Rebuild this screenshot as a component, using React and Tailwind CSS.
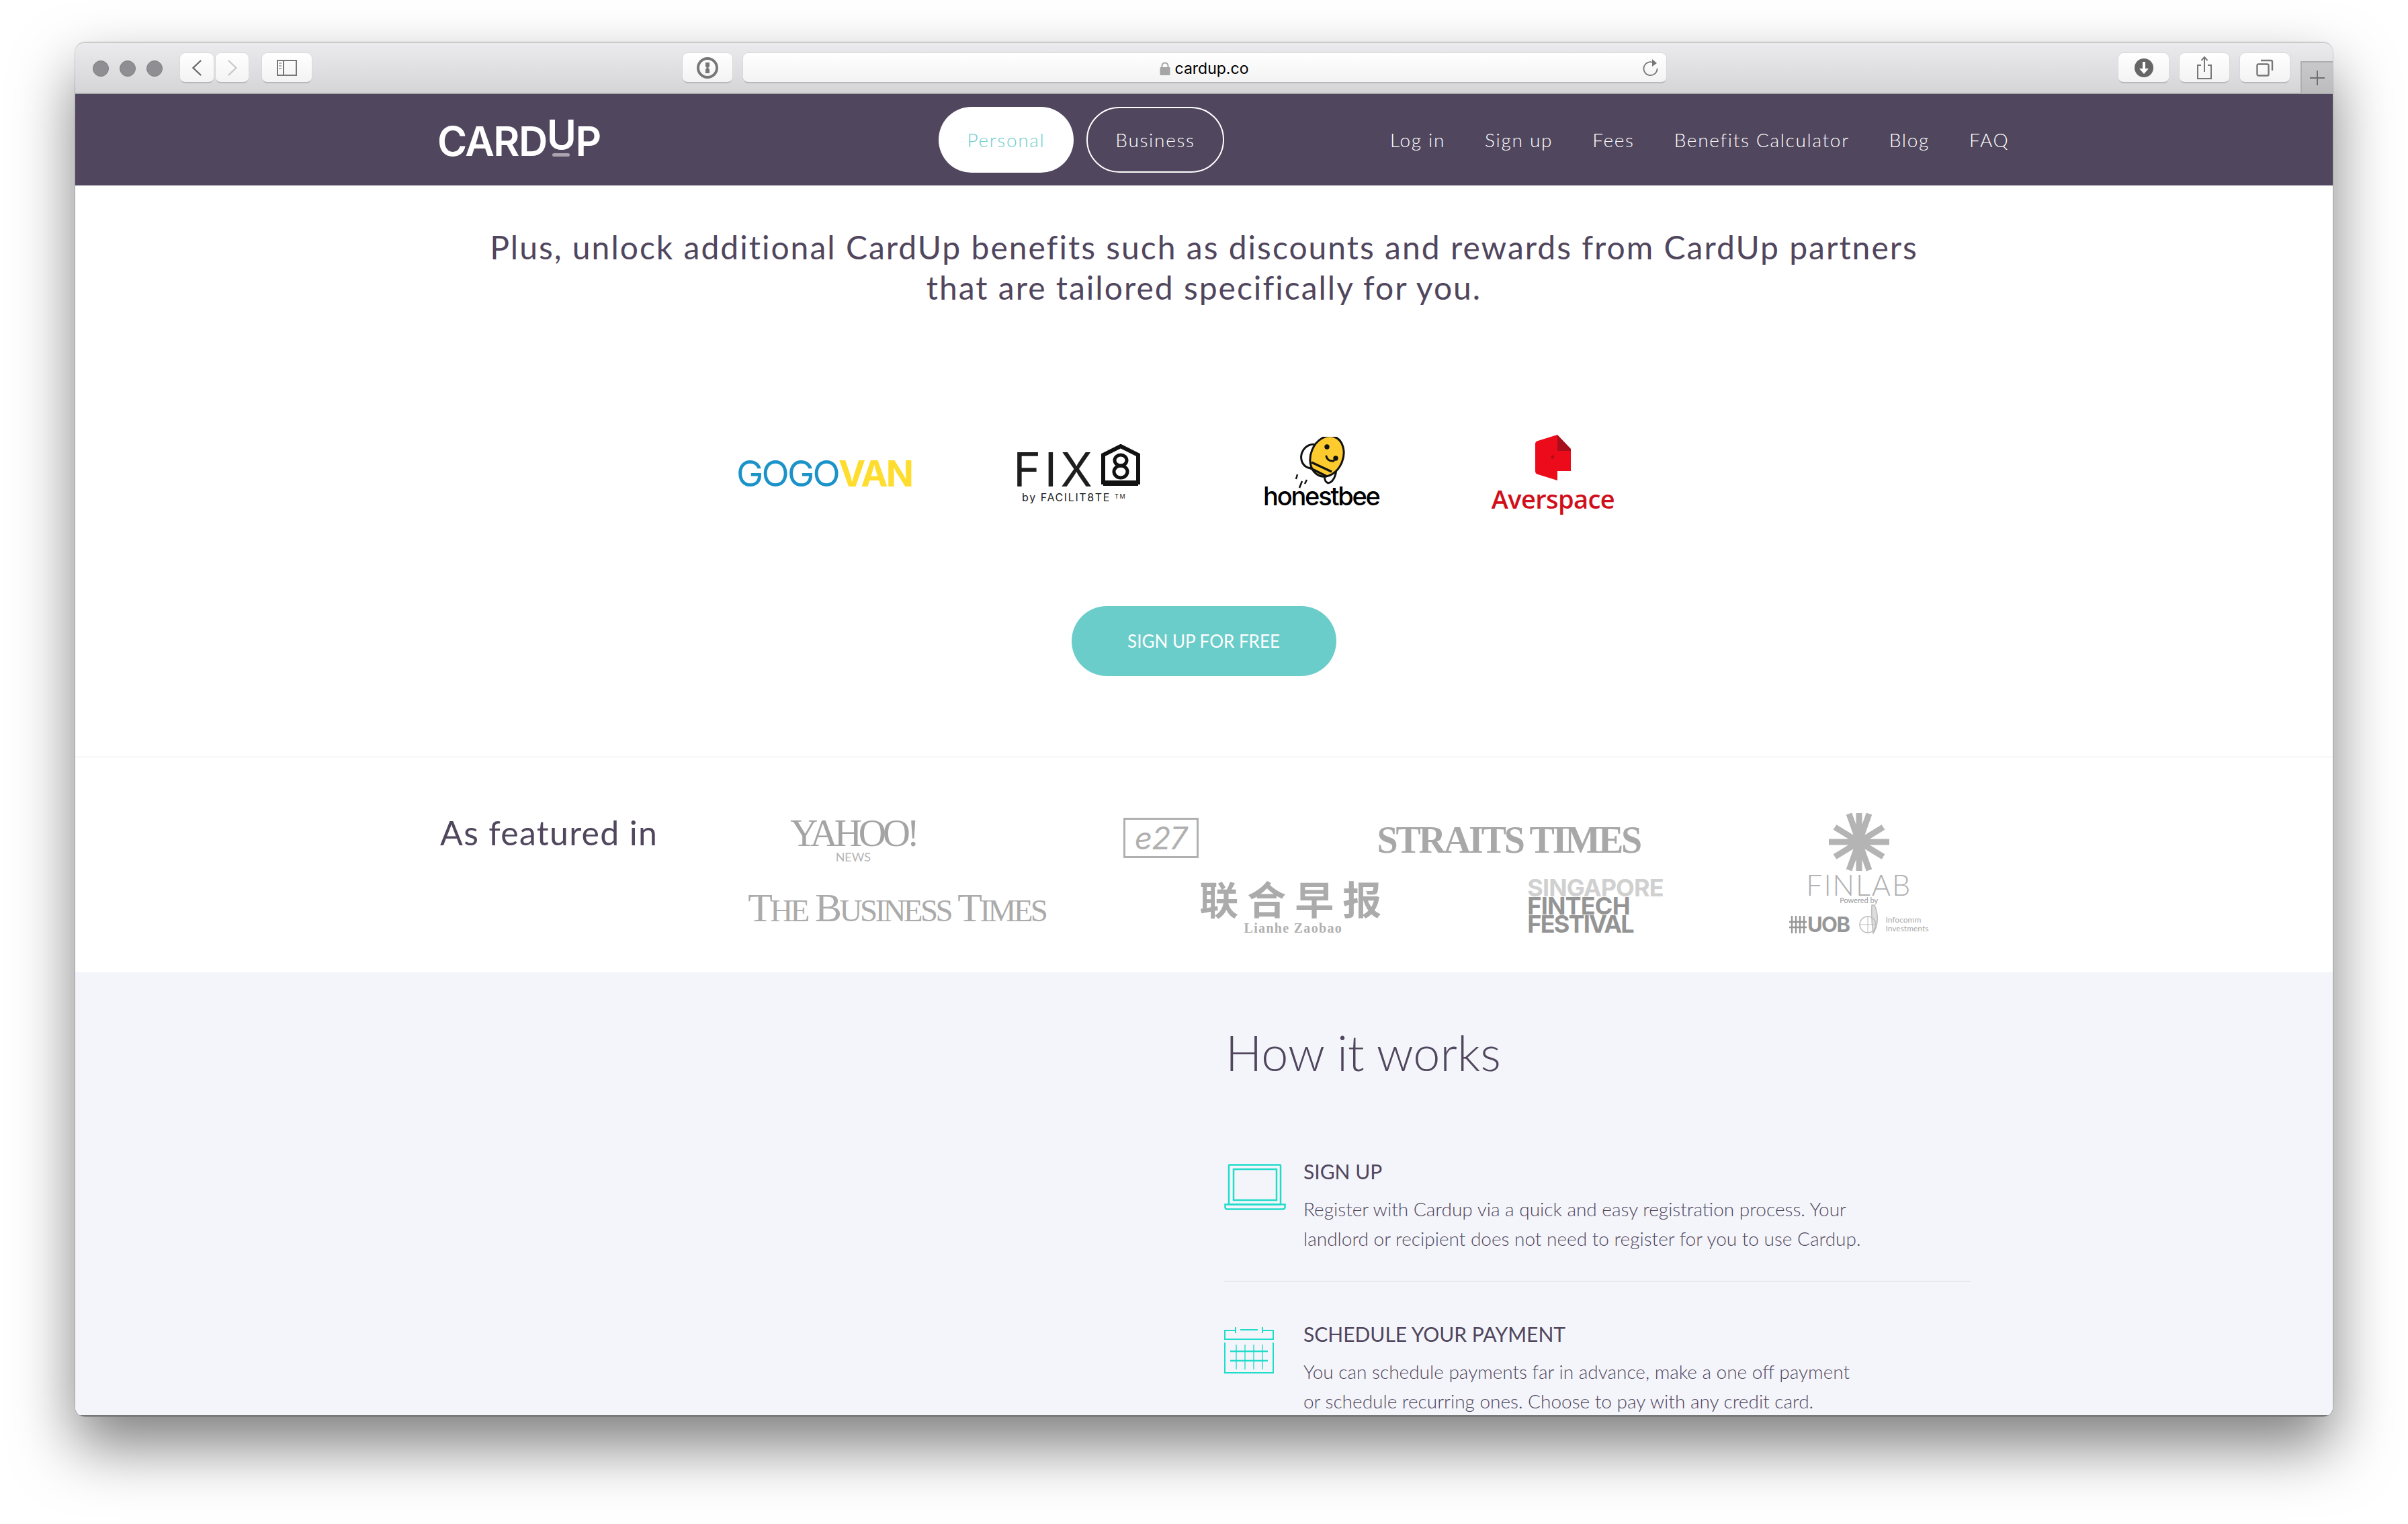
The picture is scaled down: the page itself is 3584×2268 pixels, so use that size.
const lato = { fontFamily: 'Lato, sans-serif' };
const inter = { fontFamily: 'Inter, sans-serif' };
const serif = { fontFamily: '"Liberation Serif", serif' };

const navLinks = ['Log in', 'Sign up', 'Fees', 'Benefits Calculator', 'Blog', 'FAQ'];

const ToolButton = ({ className = '', children }) => (
  <div className={`h-[45px] flex items-center justify-center rounded-[8px] bg-gradient-to-b from-white to-[#f3f3f4] border-b-2 border-[#b9b8bb] shadow-[0_0_0_1px_#d8d7da] ${className}`}>
    {children}
  </div>
);

const OnePassword = () => (
  <svg width="34" height="34" viewBox="0 0 34 34">
    <circle cx="17" cy="17" r="14" fill="none" stroke="#777" strokeWidth="4" />
    <path d="M14 9h6v6l-2 2 2 2v6h-6v-6l2-2-2-2z" fill="#777" />
  </svg>
);

const SidebarIcon = () => (
  <svg width="30" height="24" viewBox="0 0 30 24" fill="none" stroke="#777" strokeWidth="2">
    <rect x="1" y="1" width="28" height="22" />
    <path d="M10 1v22" />
    <path d="M3 5h4M3 9h4M3 13h4" strokeWidth="1.5" stroke="#999" />
  </svg>
);

const Chevron = ({ color, flip }) => (
  <svg width="14" height="24" viewBox="0 0 14 24" fill="none" stroke={color} strokeWidth="2.4" strokeLinecap="round" className={flip ? 'rotate-180' : ''}>
    <path d="M12.5 1.5L1.5 12l11 10.5" />
  </svg>
);

const Toolbar = () => (
  <div className="h-[77px] flex bg-gradient-to-b from-[#ebeaec] to-[#d5d4d7] border-t border-[#c9c9c9] border-b-2 border-b-[#aeadb0] rounded-t-[14px] relative">
    <div className="flex items-center w-full h-[45px] mt-[15px] pl-[26px]">
      <div className="flex gap-[16px]">
        <div className="w-[24px] h-[24px] rounded-full bg-[#8f8e92] border border-[#7d7c80]" />
        <div className="w-[24px] h-[24px] rounded-full bg-[#8f8e92] border border-[#7d7c80]" />
        <div className="w-[24px] h-[24px] rounded-full bg-[#8f8e92] border border-[#7d7c80]" />
      </div>
      <ToolButton className="w-[50px] ml-[26px]"><Chevron color="#6d6d6d" /></ToolButton>
      <ToolButton className="w-[49px] ml-[3px]"><Chevron color="#c9c9c9" flip /></ToolButton>
      <ToolButton className="w-[74px] ml-[20px]"><SidebarIcon /></ToolButton>
      <ToolButton className="w-[74px] ml-[552px]"><OnePassword /></ToolButton>
      <ToolButton className="w-[1374px] ml-[16px] relative">
        <div className="flex items-center gap-[7px] mt-[3px] -ml-[2px]" style={inter}>
          <svg width="16" height="20" viewBox="0 0 16 20">
            <path d="M3.5 9V6a4.5 4.5 0 0 1 9 0v3" fill="none" stroke="#a5a5a5" strokeWidth="2" />
            <rect x="0.5" y="8" width="15" height="12" rx="1" fill="#a5a5a5" />
          </svg>
          <span className="text-[23px] leading-[28px] text-black">cardup.co</span>
        </div>
        <svg className="absolute right-[10px] top-[8px]" width="26" height="28" viewBox="0 0 26 28" fill="none">
          <path d="M19 7.5A10 10 0 1 0 22.5 15" stroke="#777" strokeWidth="1.8" />
          <path d="M15 1l7 6-7 5z" fill="#777" />
        </svg>
      </ToolButton>
      <ToolButton className="w-[75px] ml-[673px]">
        <svg width="30" height="30" viewBox="0 0 30 30">
          <circle cx="15" cy="15" r="14" fill="#666" />
          <path d="M13 6h4v10h5l-7 8-7-8h5z" fill="#fff" />
        </svg>
      </ToolButton>
      <ToolButton className="w-[74px] ml-[16px]">
        <svg width="24" height="36" viewBox="0 0 24 36" fill="none" stroke="#777" strokeWidth="2">
          <path d="M7 14H2v20h20V14h-5" />
          <path d="M12 24V2M7.5 7L12 2l4.5 5" />
        </svg>
      </ToolButton>
      <ToolButton className="w-[74px] ml-[16px]">
        <svg width="26" height="26" viewBox="0 0 26 26" fill="none" stroke="#777" strokeWidth="2.4">
          <rect x="1.5" y="7.5" width="17" height="17" rx="2" />
          <path d="M7 2h15a2 2 0 0 1 2 2v13" />
        </svg>
      </ToolButton>
    </div>
    <div className="absolute right-0 bottom-0 w-[48px] h-[47px] flex items-center justify-center bg-gradient-to-b from-[#c8c7ca] to-[#bcbbbe] border-t-2 border-l-2 border-[#aeadb0]">
      <svg width="24" height="24" viewBox="0 0 24 24" stroke="#6f6f6f" strokeWidth="2"><path d="M12 1v22M1 12h22" /></svg>
    </div>
  </div>
);

const Nav = () => (
  <div className="h-[136px] bg-[#50465d] flex items-center text-white" style={lato}>
    <div className="w-[1284px] pl-[539px] shrink-0">
      <div className="flex items-end text-[60px] leading-none font-semibold tracking-[-1.5px] mt-[3px]" style={inter}>
        <span>CARD</span>
        <span className="relative -top-[10px]">U
          <span className="absolute left-[8px] top-[58px] w-[26px] h-[5px] rounded-full bg-[#a9a4b0]" />
        </span>
        <span>P</span>
      </div>
    </div>
    <div className="flex gap-[19px] ml-[1px]">
      <div className="w-[201px] h-[98px] rounded-full bg-white text-[#6bcdca] flex items-center justify-center text-[28px] font-light tracking-[1.7px]">Personal</div>
      <div className="w-[205px] h-[98px] rounded-full border-2 border-white flex items-center justify-center text-[28px] font-light tracking-[1.7px]">Business</div>
    </div>
    <div className="flex gap-[59px] ml-[247px] text-[28px] font-light tracking-[1.7px]">
      {navLinks.map((link) => <span key={link}>{link}</span>)}
    </div>
  </div>
);

const Bee = () => (
  <svg width="83" height="77" viewBox="0 0 83 77" fill="none" stroke="#111" strokeWidth="3">
    <ellipse cx="28" cy="29" rx="16" ry="18" transform="rotate(25 28 29)" fill="#fff" />
    <ellipse cx="55" cy="54" rx="8" ry="15" transform="rotate(15 55 54)" fill="#fff" />
    <ellipse cx="50" cy="29" rx="24" ry="31" transform="rotate(22 50 29)" fill="#fecb2f" />
    <path d="M27 38l30 14M24 46l26 13" strokeWidth="3.5" />
    <path d="M49 29q2 8 11 7" strokeLinecap="round" />
    <circle cx="50" cy="15" r="2.2" fill="#111" />
    <circle cx="63" cy="32" r="2.2" fill="#111" />
    <path d="M6 56l-2 7M20 64l-3 6M13 66l-4 10" strokeWidth="2.5" />
  </svg>
);

const Door = () => (
  <svg width="53" height="68" viewBox="0 0 53 68">
    <path d="M33 22h20v32H33z" fill="#ec0b1a" />
    <path d="M33 0l20 21v3H33z" fill="#a80f1c" />
    <path d="M4 9L33 0v68L4 59q-4-1-4-5V14q0-4 4-5z" fill="#ec0b1a" />
    <circle cx="26" cy="33" r="2.5" fill="#b50c18" />
  </svg>
);

const Partners = () => (
  <div className="flex items-start h-[150px] mt-[190px]">
    <div className="ml-[984px] mt-[37px] text-[54px] leading-[39px] tracking-[-2.8px] font-medium" style={inter}>
      <span className="text-[#1b93c9] font-normal">GOGO</span><span className="text-[#ffdd2f] font-bold">VAN</span>
    </div>
    <div className="ml-[151px] flex flex-col items-start mt-[13px]" style={inter}>
      <div className="flex items-end h-[62px]">
        <span className="text-[70px] leading-[48px] font-normal tracking-[5px] text-[#1d1d1d]">FIX</span>
        <svg className="ml-[8px]" width="58" height="62" viewBox="0 0 58 62" fill="none" stroke="#111">
          <path d="M3 57V16L29 3l26 13v41z" strokeWidth="6" />
          <path d="M3 58h52" strokeWidth="8" />
          <ellipse cx="29" cy="24" rx="9" ry="8" strokeWidth="5" />
          <ellipse cx="29" cy="41" rx="10" ry="9" strokeWidth="5" />
        </svg>
      </div>
      <div className="ml-[13px] mt-[8px] text-[16px] leading-[18px] font-normal text-[#222] tracking-[1.6px] whitespace-nowrap">
        by FACILIT8TE <sup className="text-[9px]">TM</sup>
      </div>
    </div>
    <div className="ml-[183px] flex flex-col items-center mt-[2px]">
      <Bee />
      <div className="text-[38px] leading-[34px] font-medium tracking-[-2.2px] text-black -mt-[6px]" style={inter}>honestbee</div>
    </div>
    <div className="ml-[167px] flex flex-col items-center -mt-[1px]">
      <Door />
      <div className="text-[38px] leading-[40px] font-semibold tracking-[-0.6px] text-[#d00f1a] mt-[7px]" style={{ fontFamily: '"Open Sans", sans-serif' }}>Averspace</div>
    </div>
  </div>
);

const UobMark = () => (
  <svg className="shrink-0" width="26" height="28" viewBox="0 0 26 28" stroke="#979797" strokeWidth="2.4">
    <path d="M4 1v26M10 1v26M16 1v26M22 1v26M0 10h26M0 18h26" />
  </svg>
);

const InfocommMark = () => (
  <svg className="shrink-0" width="36" height="44" viewBox="0 0 36 44" fill="none" stroke="#bbb" strokeWidth="1.5">
    <path d="M24 1c6 14 6 30-2 42-2-14-3-28-2-42z" fill="#ddd" />
    <ellipse cx="14" cy="30" rx="12" ry="12" />
    <path d="M2 30h24M14 18v24" strokeWidth="1" />
  </svg>
);

const Featured = () => (
  <div className="h-[321px] border-t border-[#ececef] flex items-start bg-white text-[#a8a8a8]">
    <div className="ml-[543px] mt-[82px] text-[50px] leading-[60px] tracking-[1.3px] text-[#50465d]" style={lato}>As featured in</div>
    <div className="flex flex-col ml-[134px] mt-[90px] shrink-0">
      <div className="flex items-start h-[112px] -mt-[4px]">
        <div className="ml-[63px] mt-[4px] flex flex-col items-center">
          <span className="text-[57px] leading-[46px] tracking-[-5.2px] text-[#a4a4a4]" style={serif}>YAHOO!</span>
          <span className="text-[18px] leading-[18px] mt-[3px] text-[#b4b4b4]" style={lato}>NEWS</span>
        </div>
        <div className="ml-[308px] mt-[4px] w-[112px] h-[60px] border-[3px] border-[#b0b0b0] flex items-center justify-center">
          <span className="text-[46px] italic leading-none tracking-[-1px] text-[#b0b0b0]" style={inter}>e27</span>
        </div>
        <span className="ml-[266px] mt-[12px] text-[56px] leading-[50px] font-bold tracking-[-3.2px] text-[#a8a8a8] whitespace-nowrap" style={serif}>STRAITS TIMES</span>
      </div>
      <div className="flex items-start -mt-[4px]">
        <span className="text-[60px] leading-[48px] mt-[6px] tracking-[-3.6px] text-[#ababab] whitespace-nowrap" style={serif}>
          T<span className="text-[47px]">HE</span> B<span className="text-[47px]">USINESS</span> T<span className="text-[47px]">IMES</span>
        </span>
        <div className="ml-[229px] flex flex-col items-center -mt-[16px]">
          <span className="text-[58px] leading-[62px] tracking-[13px] text-[#ababab] font-bold whitespace-nowrap" style={{ fontFamily: '"Noto Sans CJK SC", sans-serif' }}>联合早报</span>
          <span className="text-[20px] leading-[22px] font-bold tracking-[1.3px] text-[#b0b0b0] mt-[3px] -ml-[5px]" style={serif}>Lianhe Zaobao</span>
        </div>
        <div className="ml-[204px] flex flex-col -mt-[13px] font-bold whitespace-nowrap" style={inter}>
          <span className="text-[36px] leading-[27px] tracking-[-0.9px] text-[#d0d0d0]">SINGAPORE</span>
          <span className="text-[36px] leading-[27px] tracking-[-0.8px] text-[#949494]">FINTECH</span>
          <span className="text-[36px] leading-[27px] tracking-[-1.8px] text-[#949494]">FESTIVAL</span>
        </div>
      </div>
    </div>
    <div className="flex flex-col items-center ml-[191px] mt-[81px] w-[200px] shrink-0">
      <svg width="90" height="90" viewBox="0 0 90 90" stroke="#b4b4b4" strokeWidth="9">
        <path d="M45 2v86M30 3l30 84M60 3L30 87M9 23l72 44M81 23L9 67M0 45h90" />
      </svg>
      <span className="text-[43px] leading-[36px] font-light tracking-[2px] text-[#b0b0b0] mt-[1px]" style={lato}>FINLAB</span>
      <span className="text-[11px] leading-[10px] text-[#999]" style={lato}>Powered by</span>
      <div className="flex items-end mt-[1px] whitespace-nowrap">
        <UobMark />
        <span className="text-[31px] leading-[28px] font-bold tracking-[-1.5px] text-[#979797] ml-[1px]" style={inter}>UOB</span>
        <div className="ml-[14px]"><InfocommMark /></div>
        <span className="text-[12px] leading-[13px] text-[#aaa] ml-[4px] mb-[2px]" style={lato}>Infocomm<br />Investments</span>
      </div>
    </div>
  </div>
);

const LaptopIcon = () => (
  <svg width="92" height="70" viewBox="0 0 92 70" fill="none" stroke="#22dccb" strokeWidth="2.5">
    <rect x="7" y="1.5" width="77" height="59" rx="1" />
    <rect x="14" y="8" width="64" height="46" />
    <path d="M1.5 60.5h89v4a3 3 0 0 1-3 3h-83a3 3 0 0 1-3-3z" />
  </svg>
);

const CalendarIcon = () => (
  <svg width="74" height="70" viewBox="0 0 74 70" fill="none" stroke="#22dccb" strokeWidth="2">
    <path d="M17 6H1v13h72V6H57" />
    <path d="M24 5h26M17 1v9M57 1v9" />
    <path d="M1 24v45h72V24" />
    <path d="M18 27v37M31 27v37M44 27v37M57 27v37" strokeWidth="1.4" />
    <path d="M9 37h56M9 51h56" strokeWidth="2.4" />
  </svg>
);

const Step = ({ icon, title, lines }) => (
  <div className="flex">
    <div className="w-[118px] shrink-0 pt-[4px]">{icon}</div>
    <div>
      <div className="text-[30px] leading-[30px] text-[#50465d]">{title}</div>
      <div className="mt-[19px] text-[28px] leading-[44px] font-light text-[#50465d] whitespace-nowrap">
        {lines.map((line) => <div key={line}>{line}</div>)}
      </div>
    </div>
  </div>
);

const HowItWorks = () => (
  <div className="bg-[#f4f5fa] h-[661px] pl-[1710px] overflow-hidden border-b-2 border-[#777]" style={lato}>
    <h2 className="ml-[2px] mt-[74px] text-[72px] leading-[90px] font-light text-[#50465d] whitespace-nowrap">How it works</h2>
    <div className="w-[1111px] mt-[117px]">
      <Step
        icon={<LaptopIcon />}
        title="SIGN UP"
        lines={['Register with Cardup via a quick and easy registration process. Your', 'landlord or recipient does not need to register for you to use Cardup.']}
      />
      <div className="h-[2px] bg-[#e8e9ee] mt-[41px] mb-[62px]" />
      <Step
        icon={<CalendarIcon />}
        title="SCHEDULE YOUR PAYMENT"
        lines={['You can schedule payments far in advance, make a one off payment', 'or schedule recurring ones. Choose to pay with any credit card.']}
      />
    </div>
  </div>
);

export default function App() {
  return (
    <div className="w-[3584px] h-[2268px] bg-white pt-[63px] pl-[112px] overflow-hidden">
      <div className="w-[3360px] h-[2045px] rounded-[14px] overflow-hidden shadow-[0_0_0_1px_rgba(0,0,0,0.15),0_44px_90px_rgba(0,0,0,0.5)] relative">
        <Toolbar />
        <Nav />
        <div className="bg-white h-[850px] flex flex-col" style={lato}>
          <div className="mt-[62px] text-center text-[48px] leading-[60px] tracking-[2px] text-[#50465d]">
            <div>Plus, unlock additional CardUp benefits such as discounts and rewards from CardUp partners</div>
            <div>that are tailored specifically for you.</div>
          </div>
          <Partners />
          <div className="flex justify-center mt-[104px] ml-[-1px]">
            <div className="w-[394px] h-[104px] rounded-full bg-[#6bcdca] text-white text-[26px] flex items-center justify-center">SIGN UP FOR FREE</div>
          </div>
        </div>
        <Featured />
        <HowItWorks />
      </div>
    </div>
  );
}
